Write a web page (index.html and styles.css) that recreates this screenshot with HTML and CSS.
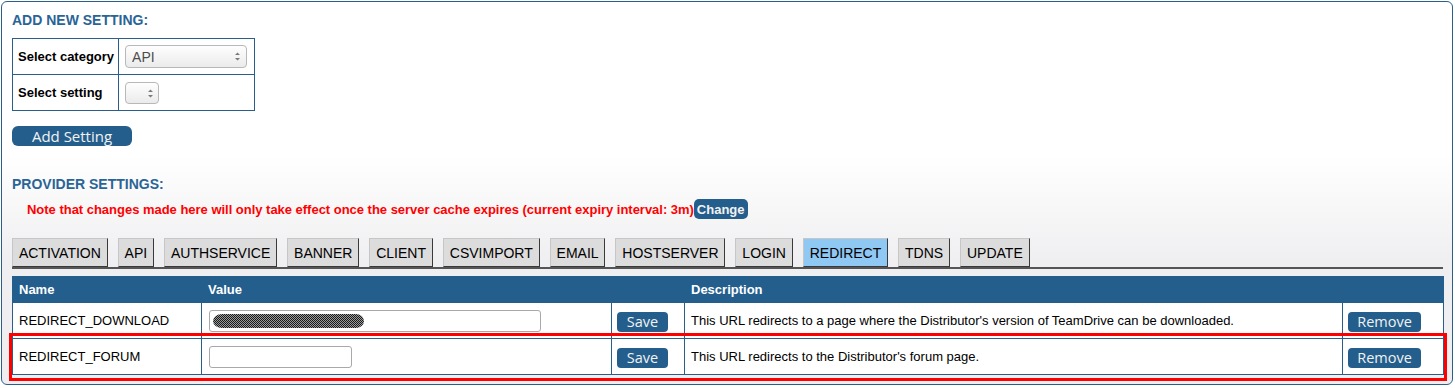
FILE: index.html
```html
<!DOCTYPE html>
<html lang="en">
<head>
    <meta charset="UTF-8">
    <title>Provider Settings</title>
    <link rel="stylesheet" href="styles.css">
</head>
<body>
    <div class="panel">
        <h2 class="section-title">ADD NEW SETTING:</h2>
        <table class="add-form">
            <tr>
                <th>Select category</th>
                <td>
                    <span class="picker picker-wide">
                        <select><option>API</option></select>
                        <svg class="spin" width="7" height="11" viewBox="0 0 7 11"><path d="M1 4 L3.5 1.5 L6 4 Z M1 7 L3.5 9.5 L6 7 Z"/></svg>
                    </span>
                </td>
            </tr>
            <tr>
                <th>Select setting</th>
                <td>
                    <span class="picker picker-small">
                        <select></select>
                        <svg class="spin" width="7" height="11" viewBox="0 0 7 11"><path d="M1 4 L3.5 1.5 L6 4 Z M1 7 L3.5 9.5 L6 7 Z"/></svg>
                    </span>
                </td>
            </tr>
        </table>
        <button class="btn btn-add">Add Setting</button>

        <h2 class="section-title provider">PROVIDER SETTINGS:</h2>
        <p class="note">Note that changes made here will only take effect once the server cache expires (current expiry interval: 3m)<button class="btn btn-change">Change</button></p>

        <ul class="tabs">
            <li>ACTIVATION</li>
            <li>API</li>
            <li>AUTHSERVICE</li>
            <li>BANNER</li>
            <li>CLIENT</li>
            <li>CSVIMPORT</li>
            <li>EMAIL</li>
            <li>HOSTSERVER</li>
            <li>LOGIN</li>
            <li class="active">REDIRECT</li>
            <li>TDNS</li>
            <li>UPDATE</li>
        </ul>

        <table class="settings">
            <colgroup>
                <col class="col-name">
                <col class="col-value">
                <col class="col-save">
                <col class="col-desc">
                <col class="col-remove">
            </colgroup>
            <thead>
                <tr><th>Name</th><th>Value</th><th></th><th>Description</th><th></th></tr>
            </thead>
            <tbody>
                <tr>
                    <td>REDIRECT_DOWNLOAD</td>
                    <td><div class="field field-long"><span class="scribble"></span></div></td>
                    <td><button class="btn btn-save">Save</button></td>
                    <td>This URL redirects to a page where the Distributor's version of TeamDrive can be downloaded.</td>
                    <td><button class="btn btn-remove">Remove</button></td>
                </tr>
                <tr>
                    <td>REDIRECT_FORUM</td>
                    <td><div class="field field-short"></div></td>
                    <td><button class="btn btn-save">Save</button></td>
                    <td>This URL redirects to the Distributor's forum page.</td>
                    <td><button class="btn btn-remove">Remove</button></td>
                </tr>
            </tbody>
        </table>
    </div>
    <div class="highlight"></div>
</body>
</html>
```

FILE: styles.css
```css
body {
    margin: 0;
    font-family: "Liberation Sans", Arial, sans-serif;
    font-size: 13px;
    color: #000;
    background: #fff;
    position: relative;
}
.panel {
    box-sizing: border-box;
    height: 384px;
    margin: 1px 2px 0 1px;
    padding: 10px 9px 0 10px;
    border: 1px solid #2a5f8b;
    border-radius: 6px;
    background: linear-gradient(#fff 40%, #efeff1 68%);
}
.section-title {
    margin: 0;
    font-size: 14px;
    line-height: 16px;
    font-weight: bold;
    color: #2a6496;
}
.section-title.provider {
    margin-top: 30px;
}
.add-form {
    margin-top: 10px;
    border-collapse: collapse;
    border: 1px solid #2a5f8b;
}
.add-form th,
.add-form td {
    border: 1px solid #2a5f8b;
    height: 35px;
    padding: 0 6px;
    text-align: left;
    white-space: nowrap;
}
.add-form th {
    width: 94px;
    padding: 0 4px 0 5px;
    font-weight: bold;
}
.add-form td {
    width: 122px;
    padding-right: 7px;
}
.picker {
    position: relative;
    display: block;
}
.picker select {
    display: block;
    appearance: none;
    -webkit-appearance: none;
    box-sizing: border-box;
    height: 23px;
    margin: 0;
    padding: 0 0 0 6px;
    border: 1px solid #b8b8b8;
    border-radius: 4px;
    background: linear-gradient(#fefefe, #ebebeb);
    font-family: "Liberation Sans", Arial, sans-serif;
    font-size: 14px;
    color: #4d4d4d;
}
.picker-wide select {
    width: 122px;
}
.picker-small select {
    width: 34px;
    height: 22px;
}
.spin {
    position: absolute;
    right: 6px;
    top: 6px;
    fill: #7a7a7a;
}
.picker-small .spin {
    left: 22px;
    right: auto;
}
.btn {
    border: none;
    background-color: #245e8c;
    color: #f2f2f2;
    cursor: pointer;
    padding: 0;
}
.btn-add {
    display: block;
    width: 120px;
    height: 20px;
    margin-top: 15px;
    border-radius: 6px;
    font-family: "Open Sans", sans-serif;
    font-size: 15px;
    line-height: 20px;
}
.note {
    display: flex;
    align-items: center;
    height: 20px;
    margin: 7px 0 0;
    padding-left: 15px;
    color: #f00;
    font-weight: bold;
    font-size: 13px;
    letter-spacing: -0.02px;
}
.btn-change {
    height: 20px;
    padding: 0 3px;
    border-radius: 5px;
    font-family: "Liberation Sans", Arial, sans-serif;
    font-weight: bold;
    font-size: 13px;
    letter-spacing: 0;
}
.tabs {
    display: flex;
    gap: 10px;
    list-style: none;
    margin: 19px 0 7px;
    padding: 0;
    border-bottom: 2px solid #555;
}
.tabs li {
    padding: 6px 5.9px 5px;
    line-height: 16px;
    font-size: 14px;
    background: #dcdcdc;
    border: 1px solid;
    border-color: #c6c6c6 #3a3a3a #3a3a3a #c6c6c6;
}
.tabs li.active {
    background: #8ec8f3;
}
.settings {
    width: 1431px;
    table-layout: fixed;
    border-collapse: collapse;
    border: 1px solid #2a5f8b;
    background: #fff;
}
.col-name { width: 189px; }
.col-value { width: 410px; }
.col-save { width: 73px; }
.col-desc { width: 658px; }
.col-remove { width: 101px; }
.settings th {
    height: 25px;
    padding: 0 6px;
    background: #235e8c;
    border: 1px solid #235e8c;
    color: #fff;
    text-align: left;
    font-weight: bold;
}
.settings td {
    height: 35px;
    padding: 0 5px 0 5px;
    border: 1px solid #2a5f8b;
}
.settings td:first-child,
.settings td:nth-child(4) {
    padding-left: 6px;
}
.field {
    box-sizing: border-box;
    display: flex;
    align-items: center;
    height: 22px;
    margin-left: 2px;
    padding-left: 3px;
    border: 1px solid #a9a9a9;
    border-radius: 3px;
    background: #fff;
}
.field-long { width: 332px; }
.field-short { width: 143px; }
.scribble {
    width: 151px;
    height: 14px;
    border-radius: 9px 8px 8px 9px / 7px;
    background: repeating-conic-gradient(#1a1a1a 0 25%, #9a9a9a 0 50%) 0 0 / 2px 2px;
}
.btn-save,
.btn-remove {
    height: 20px;
    margin-top: 2px;
    border-radius: 4px;
    font-family: "Open Sans", sans-serif;
    font-size: 14.5px;
    line-height: 20px;
}
.btn-save { width: 51px; }
.btn-remove { width: 73px; }
.highlight {
    position: absolute;
    left: 9px;
    top: 333px;
    width: 1438px;
    height: 48px;
    box-sizing: border-box;
    border: 3px solid #f00;
}
```
